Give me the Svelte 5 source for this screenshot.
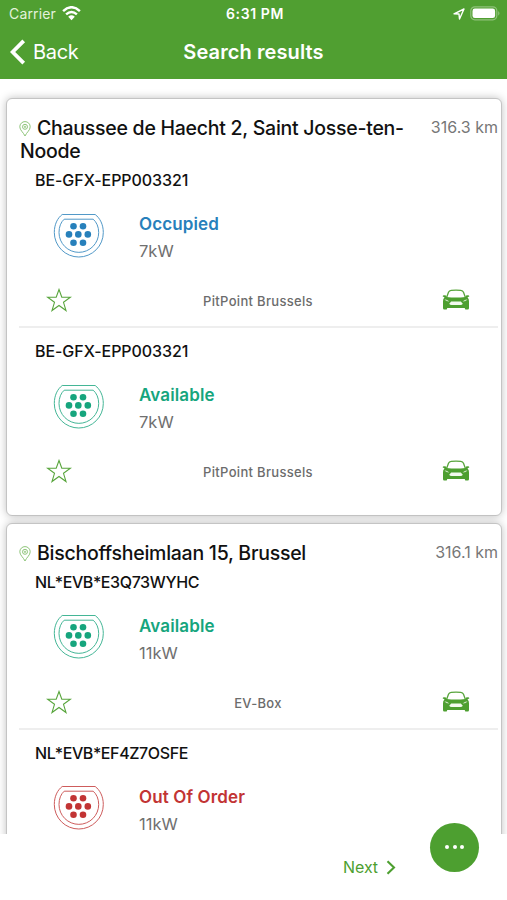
<script>
  const locations = [
    {
      address: 'Chaussee de Haecht 2, Saint Josse-ten-Noode',
      distance: '316.3 km',
      chargers: [
        { id: 'BE-GFX-EPP003321', status: 'Occupied', power: '7kW', operator: 'PitPoint Brussels', tone: 'occupied' },
        { id: 'BE-GFX-EPP003321', status: 'Available', power: '7kW', operator: 'PitPoint Brussels', tone: 'available' }
      ]
    },
    {
      address: 'Bischoffsheimlaan 15, Brussel',
      distance: '316.1 km',
      chargers: [
        { id: 'NL*EVB*E3Q73WYHC', status: 'Available', power: '11kW', operator: 'EV-Box', tone: 'available' },
        { id: 'NL*EVB*EF4Z7OSFE', status: 'Out Of Order', power: '11kW', tone: 'broken' }
      ]
    }
  ];
  const pins = [[20.5, 12.5], [30, 12.5], [16, 20.7], [25.3, 20.7], [34.8, 20.7], [20.5, 29], [30, 29]];
</script>

<div class="screen">
  <header>
    <div class="statusbar">
      <div class="carrier">
        <span>Carrier</span>
        <svg width="19" height="15" viewBox="0 0 19 15">
          <g fill="none" stroke="#fff" stroke-width="2.5">
            <path d="M1.1 5.1 Q9.5 -2.6 17.9 5.1" />
            <path d="M4.1 8.4 Q9.5 3.7 14.9 8.4" />
          </g>
          <path d="M6.2 10.7 Q9.5 8 12.8 10.7 L9.5 14.2Z" fill="#fff" />
        </svg>
      </div>
      <strong class="clock">6:31 PM</strong>
      <div class="indicators">
        <svg width="12" height="12" viewBox="0 0 12 12">
          <path d="M1 5.8 L11 1 L6.5 11 L6 6Z" fill="none" stroke="#fff" stroke-width="1.4" stroke-linejoin="round" />
        </svg>
        <svg width="31" height="15" viewBox="0 0 31 15">
          <rect x="0.8" y="0.8" width="26" height="13" rx="4" fill="none" stroke="#8fc27a" stroke-width="1.2" />
          <rect x="2.5" y="2.5" width="22.6" height="9.6" rx="2.4" fill="#fff" />
          <path d="M28.2 5 Q30.8 7.3 28.2 9.7Z" fill="#8fc27a" />
        </svg>
      </div>
    </div>
    <div class="navbar">
      <div class="back">
        <svg width="16" height="26" viewBox="0 0 16 26"><path d="M13.7 1.8 L2.6 13 L13.7 24.2" fill="none" stroke="#fff" stroke-width="3.8" /></svg>
        <span>Back</span>
      </div>
      <h1>Search results</h1>
      <div></div>
    </div>
  </header>

  <main>
    {#each locations as location}
      <section class="card">
        <div class="heading">
          <h2>
            <svg class="pin" width="12" height="16" viewBox="0 0 12 16">
              <g fill="none" stroke="#8fc57a" stroke-width="1">
                <path d="M6 15 C4.4 11.4 0.8 9.2 0.8 5.8 A5.2 5.2 0 0 1 11.2 5.8 C11.2 9.2 7.6 11.4 6 15Z" />
                <circle cx="6" cy="5.8" r="2.5" /><circle cx="6" cy="5.8" r="0.7" />
              </g>
            </svg><span>{location.address}</span>
          </h2>
          <span class="distance">{location.distance}</span>
        </div>
        {#each location.chargers as charger}
          <article class={charger.tone}>
            <div class="id" class:tight={charger.id.includes('*')}>{charger.id}</div>
            <div class="body">
              <svg width="52" height="46" viewBox="0 0 52 46">
                <g fill="none" stroke="currentColor" stroke-width="1" opacity=".8">
                  <path d="M9.2 1.5 H42.2 C47 5.2 50.3 11.5 50.3 19.5 A24.5 24.5 0 0 1 1.3 19.5 C1.3 11.5 4.4 5.2 9.2 1.5Z" />
                  <path d="M11.2 6.2 H40.2 C43.5 9 45.7 13.8 45.7 19.5 A19.8 19.8 0 0 1 6 19.5 C6 13.8 7.9 9 11.2 6.2Z" />
                </g>
                {#each pins as [x, y]}
                  <circle cx={x} cy={y + 0.7} r="3.3" fill="currentColor" />
                {/each}
              </svg>
              <div class="details">
                <strong>{charger.status}</strong>
                <span>{charger.power}</span>
              </div>
            </div>
            {#if charger.operator}
              <div class="actions">
                <svg class="star" width="26" height="24" viewBox="0 0 26 24">
                  <path d="M13 1.5 L15.8 9.2 H24.4 L17.5 14.3 L20 22.5 L13 17.5 L6 22.5 L8.5 14.3 L1.6 9.2 H10.2Z" fill="none" stroke="#58a53c" stroke-width="1.1" />
                </svg>
                <span>{charger.operator}</span>
                <svg class="car" width="28" height="22" viewBox="0 0 28 22">
                  <path d="M4.5 8.8 L6.5 3.2 Q7.2 1.5 9.2 1.3 Q14 .8 18.8 1.3 Q20.8 1.5 21.5 3.2 L23.5 8.8" fill="none" stroke="#58a53c" stroke-width="1.3" />
                  <path d="M4.5 8 Q14 9.2 23.5 8 L24 6.5 Q27.5 5.7 27.3 7.4 L25.5 8.3 Q27.2 10 27 12.5 V19 Q27 20.6 25.7 20.6 H23.8 Q22.8 20.6 22.8 19 H5.2 Q5.2 20.6 4.2 20.6 H2.3 Q1 20.6 1 19 V12.5 Q.8 10 2.5 8.3 L.7 7.4 Q.5 5.7 4 6.5Z" fill="#4d9f30" />
                  <path d="M2.5 10.2 Q6 10.4 7.3 12.5 Q3.6 12.7 2.5 10.2ZM25.5 10.2 Q22 10.4 20.7 12.5 Q24.4 12.7 25.5 10.2Z" fill="#c5e2ba" />
                  <path d="M9.2 12.6 H18.8 L20.8 14.8 Q20 16 18.5 16 H9.5 Q8 16 7.2 14.8Z" fill="#f2faee" />
                </svg>
              </div>
            {/if}
          </article>
        {/each}
      </section>
    {/each}
  </main>

  <footer>
    <div class="next">
      <span>Next</span>
      <svg width="10" height="15" viewBox="0 0 10 15"><path d="M1.5 1.2 L8 7.5 L1.5 13.8" fill="none" stroke="#4d9f30" stroke-width="2.1" /></svg>
    </div>
  </footer>
  <div class="fab"><i></i><i></i><i></i></div>
</div>

<style>
  .screen {
    position: relative;
    display: flex;
    flex-direction: column;
    width: 507px;
    height: 900px;
    overflow: hidden;
    background: #fff;
    color: #111;
    font-family: Inter, 'Liberation Sans', sans-serif;
  }
  svg { display: block; flex: none; }
  h1, h2 { margin: 0; }
  header {
    box-sizing: border-box;
    flex: none;
    height: 79px;
    background: #509f31;
    color: #fff;
  }
  .statusbar, .navbar {
    display: grid;
    grid-template-columns: 1fr auto 1fr;
    align-items: center;
  }
  .statusbar { height: 27px; padding: 0 6px 0 9px; }
  .carrier { display: flex; align-items: center; gap: 6px; font-size: 14px; color: #e3f2dc; letter-spacing: .15px; }
  .carrier svg { margin-top: -1px; }
  .clock { font-size: 14px; font-weight: 600; letter-spacing: .6px; }
  .indicators { display: flex; justify-content: flex-end; align-items: center; gap: 5px; }
  .navbar { height: 50px; padding: 0 10px; }
  .back { display: flex; align-items: center; gap: 7px; font-size: 20px; letter-spacing: -.3px; }
  h1 { font-size: 20px; font-weight: 600; letter-spacing: .1px; }
  main { flex: none; height: 755px; box-sizing: border-box; padding: 19px 5px 0 6px; overflow: hidden; }
  .card {
    box-sizing: border-box;
    margin-bottom: 7px;
    padding: 18px 3px 16px 12px;
    border: 1px solid #c4c4c4;
    border-radius: 6px;
    background: #fff;
    box-shadow: 0 0 8px rgba(0, 0, 0, .25);
  }
  .heading { display: flex; justify-content: space-between; padding-left: 1px; }
  h2 { width: 395px; margin-bottom: -.8px; font-size: 19.5px; font-weight: 500; line-height: 23.4px; letter-spacing: -.26px; }
  .pin { display: inline-block; vertical-align: -2px; margin: 0 6px 0 -1px; }
  .distance { font-size: 16px; line-height: 21px; color: #777; white-space: nowrap; }
  article { box-sizing: border-box; height: 165px; margin-bottom: 6px; border-bottom: 2px solid #eee; }
  article:last-child { margin-bottom: 0; border-color: transparent; }
  .id { padding-left: 16px; font-size: 16px; font-weight: 500; line-height: 34px; letter-spacing: -.06px; }
  .tight { letter-spacing: -.4px; }
  .body { display: flex; align-items: center; gap: 34px; height: 82px; padding-left: 34px; }
  .body svg { margin-top: -5px; }
  .details { display: flex; flex-direction: column; line-height: 27px; font-size: 16.5px; }
  .details span { color: #707070; }
  .details strong { font-size: 17px; font-weight: 600; letter-spacing: .12px; color: var(--tone); }
  .body > svg { color: var(--tone); }
  .occupied { --tone: #2780bb; }
  .available { --tone: #16a57d; }
  .broken { --tone: #c23434; }
  .actions {
    display: grid;
    grid-template-columns: 1fr auto 1fr;
    align-items: center;
    height: 44px;
    padding: 0 28px 0 27px;
  }
  .actions span { font-size: 13px; font-weight: 500; color: #6c6c6c; letter-spacing: .32px; }
  .star { margin-top: -2px; }
  .car { justify-self: end; margin-top: -2px; }
  footer { display: flex; justify-content: flex-end; height: 66px; padding-right: 111px; align-items: center; }
  .next { display: flex; align-items: center; gap: 8px; color: #4d9f30; font-size: 16px; letter-spacing: -.1px; }
  .fab {
    position: absolute;
    right: 28px;
    bottom: 28px;
    width: 49px;
    height: 49px;
    border-radius: 50%;
    background: #4d9f30;
    display: flex;
    align-items: center;
    justify-content: center;
    gap: 3.5px;
  }
  .fab i { width: 4px; height: 4px; margin-bottom: 1px; border-radius: 50%; background: #fff; }
</style>
